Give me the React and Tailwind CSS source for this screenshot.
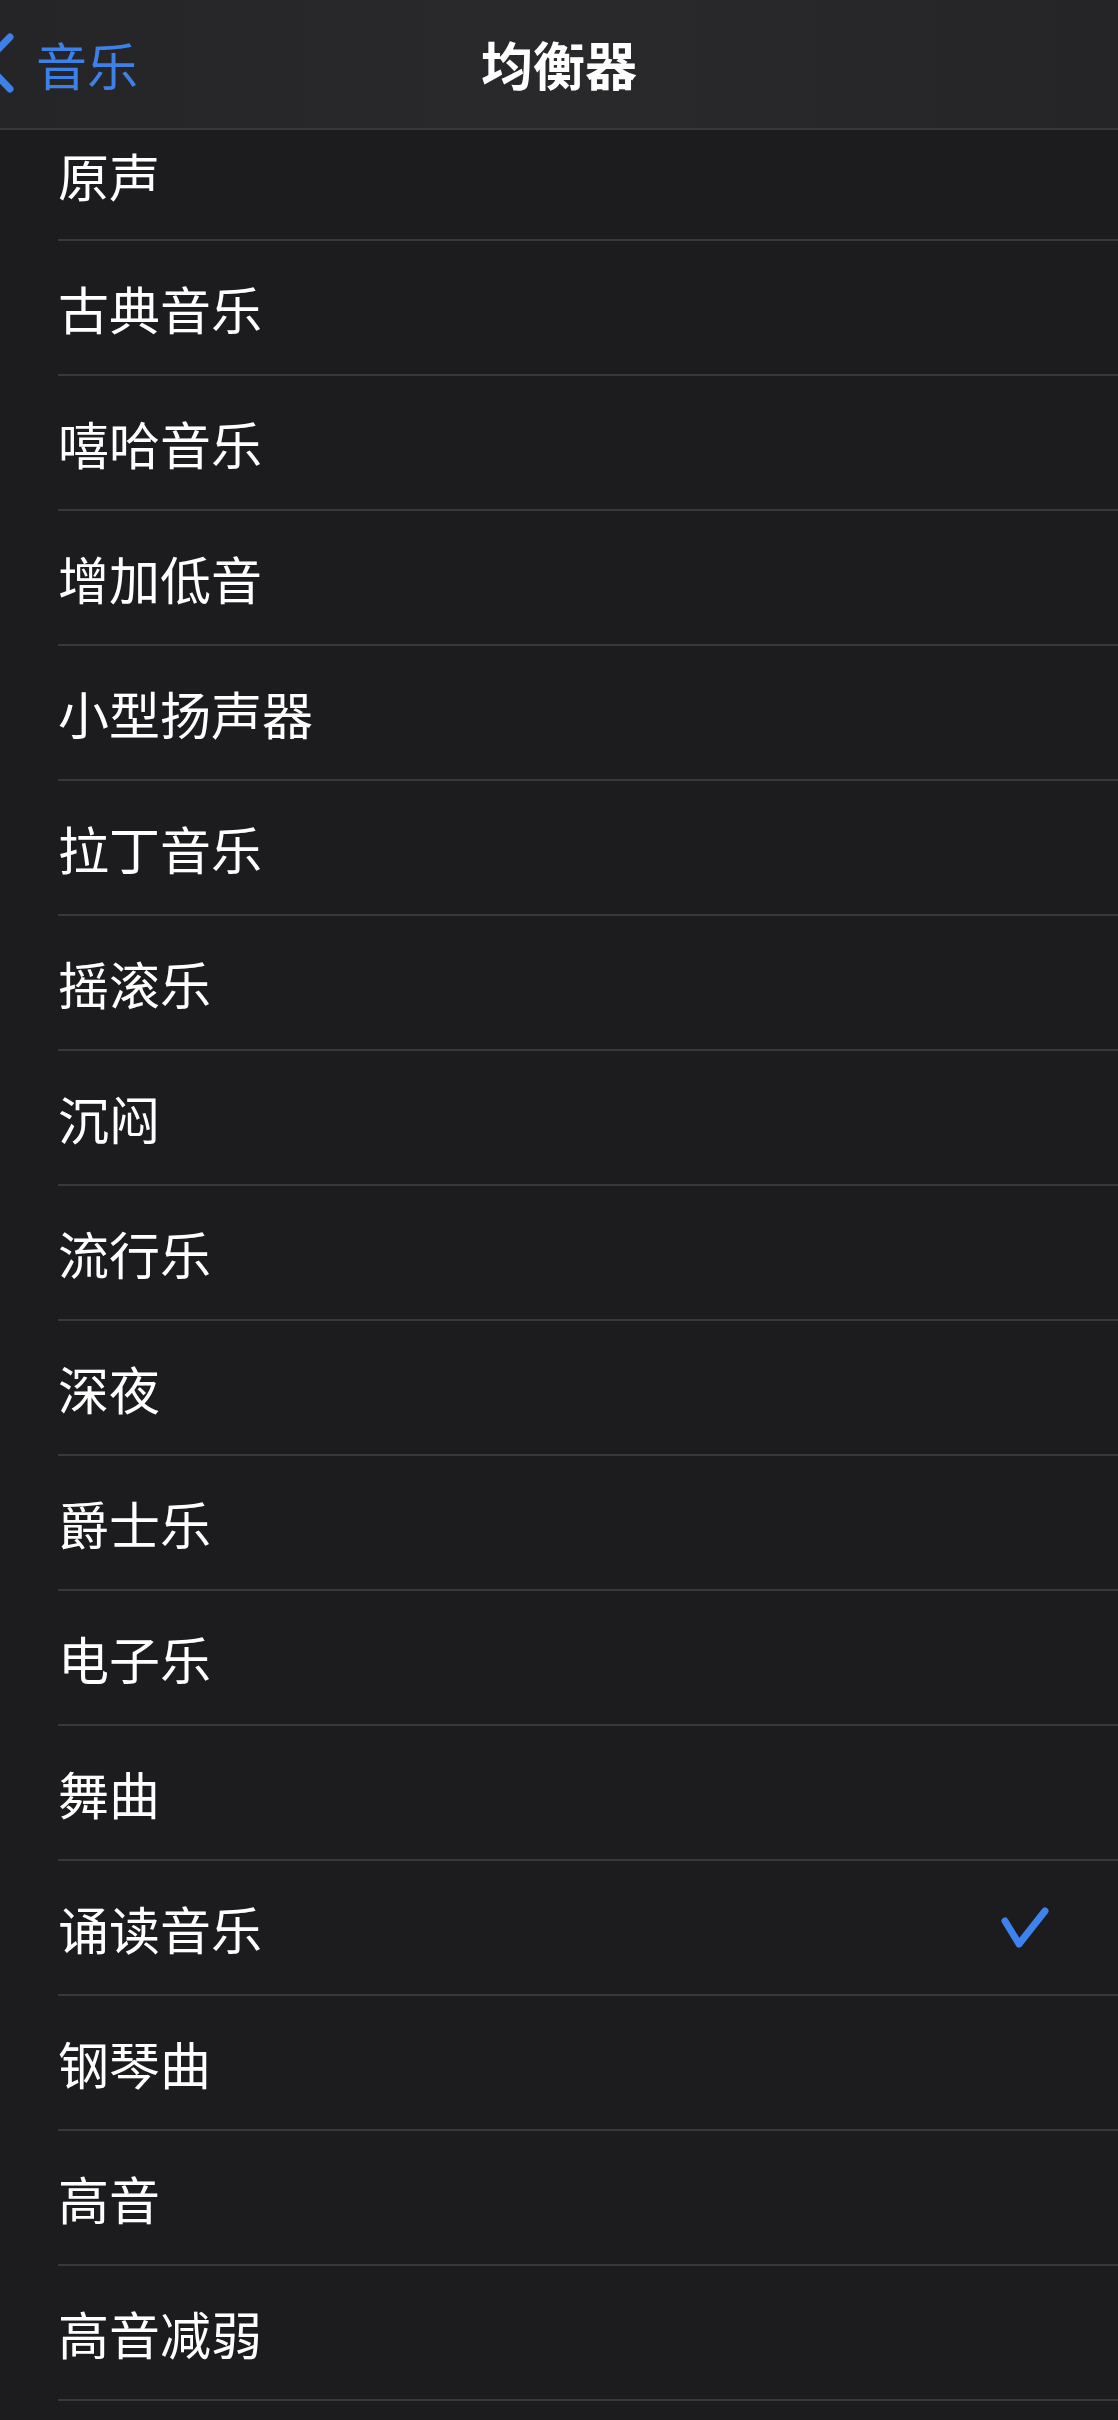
import React from 'react'

const presets = [
  '古典音乐', '嘻哈音乐', '增加低音', '小型扬声器', '拉丁音乐', '摇滚乐', '沉闷',
  '流行乐', '深夜', '爵士乐', '电子乐', '舞曲', '诵读音乐', '钢琴曲', '高音', '高音减弱',
]

const selected = '诵读音乐'

const font = { fontFamily: '"Noto Sans CJK SC", "Noto Sans", sans-serif' }

const Check = () => (
  <svg width="50" height="50" viewBox="0 0 50 50" fill="none">
    <path d="M5 17 L19 40 L45 7" stroke="#3e82f0" strokeWidth="7" strokeLinecap="round" strokeLinejoin="round" />
  </svg>
)

const Row = ({ label }) => (
  <div className="h-[135px] pl-[58px] flex flex-col">
    <div className="flex-1 flex items-center justify-between pr-[68px] pt-[2px]">
      <span className="text-[51px] leading-none text-white">{label}</span>
      {label === selected && <Check />}
    </div>
    <div className="h-[2px] bg-[#38383a]" />
  </div>
)

export default function App() {
  return (
    <div className="w-[1118px] h-[2420px] overflow-hidden bg-[#1c1c1e] flex flex-col" style={font}>
      {/* nav bar */}
      <div className="h-[130px] flex-none grid grid-cols-[1fr_auto_1fr] items-center bg-gradient-to-r from-[#252527] via-[#29292b] to-[#252527] border-b-2 border-[#38383a]">
        <div className="flex items-center">
          <svg width="34" height="60" viewBox="0 0 34 60" fill="none" className="-ml-[20px] -mt-[2px]">
            <path d="M30 4 L5 30 L30 56" stroke="#3d80e8" strokeWidth="7" strokeLinecap="round" strokeLinejoin="round" />
          </svg>
          <span className="ml-[22px] text-[51px] leading-none text-[#3d80e8]">音乐</span>
        </div>
        <h1 className="text-[52px] leading-none font-bold text-white">均衡器</h1>
        <div />
      </div>

      {/* list */}
      <div className="flex flex-col">
        <div className="h-[111px] pl-[58px] flex flex-col">
          <div className="flex-1 pt-[20px]">
            <span className="text-[51px] leading-none text-white">原声</span>
          </div>
          <div className="h-[2px] bg-[#38383a]" />
        </div>
        {presets.map((p) => (
          <Row key={p} label={p} />
        ))}
        <div className="h-[135px]" />
      </div>
    </div>
  )
}
